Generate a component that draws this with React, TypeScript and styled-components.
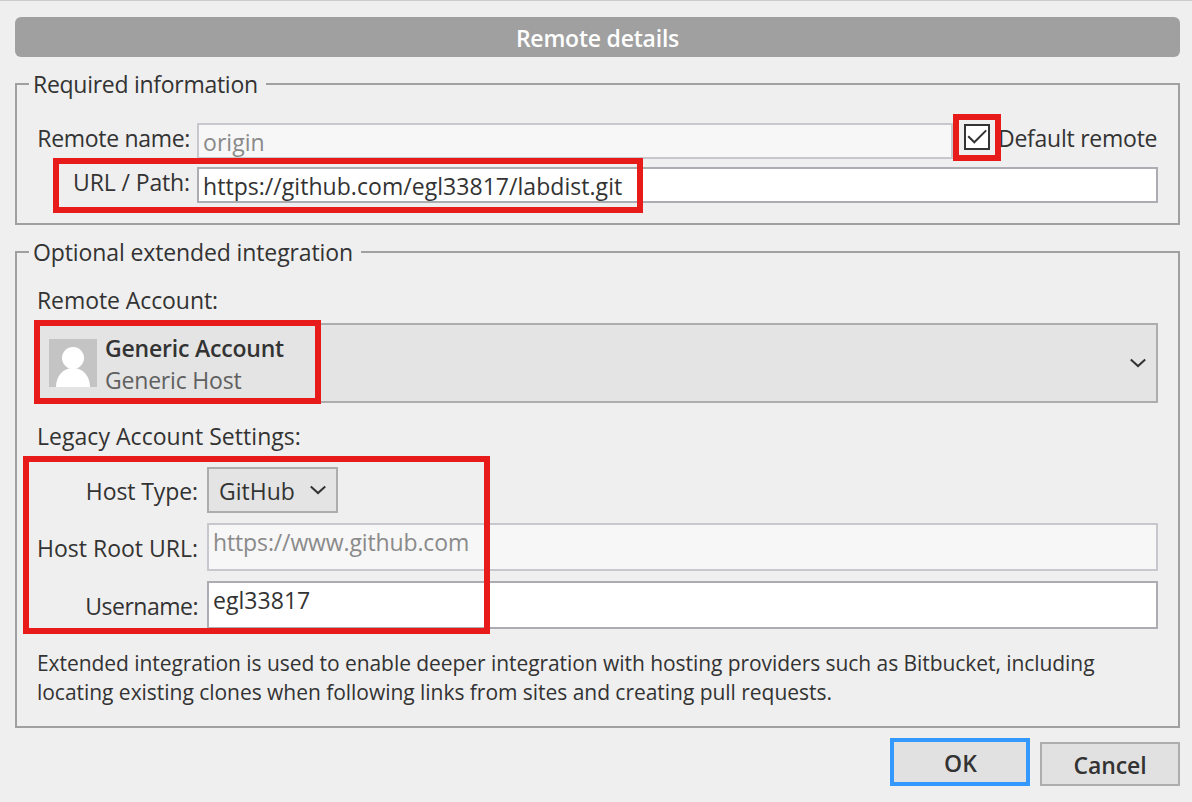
import React from 'react';
import styled, { createGlobalStyle, css } from 'styled-components';

const GlobalStyle = createGlobalStyle`
  *, *::before, *::after { box-sizing: border-box; }
  body {
    margin: 0;
    background: #efefef;
    font-family: "Open Sans", "Noto Sans", sans-serif;
    font-size: 23px;
    color: #333;
  }
`;

const Dialog = styled.main`
  position: relative;
  display: flex;
  flex-direction: column;
  width: 1192px;
  height: 802px;
  padding: 16px 12px 0 15px;
  border-top: 1px solid #cbcbcb;
  background: #efefef;
  overflow: hidden;
`;

const Text = styled.span<{ $tracking?: number }>`
  letter-spacing: ${({ $tracking = 0 }) => $tracking}px;
  white-space: nowrap;
`;

const TitleBar = styled.h1`
  flex: none;
  width: 1165px;
  height: 40px;
  margin: 0;
  padding-top: 1px;
  border-radius: 6px;
  background: #a0a0a0;
  color: #fff;
  font-size: 23px;
  font-weight: 600;
  line-height: 40px;
  text-align: center;
`;

const Group = styled.fieldset<{ $height: number }>`
  flex: none;
  width: 1165px;
  height: ${({ $height }) => $height}px;
  min-width: 0;
  margin: 14px 0 0;
  padding: 0 20px 0 12px;
  border: 2px solid #a0a0a0;
`;

const Legend = styled.legend<{ $width: number }>`
  width: ${({ $width }) => $width}px;
  height: 26px;
  padding: 0 0 0 4px;
  line-height: 26px;
`;

const RequiredGrid = styled.div`
  display: grid;
  grid-template-columns: 153px 1fr;
  column-gap: 7px;
  row-gap: 8px;
  padding: 26px 0 0 8px;
`;

const LegacyGrid = styled.div`
  display: grid;
  grid-template-columns: 161px 1fr;
  column-gap: 9px;
  row-gap: 10px;
  padding: 16px 0 0 8px;
`;

const FieldLabel = styled.label<{ $centered?: boolean }>`
  line-height: 30px;
  text-align: right;
  white-space: nowrap;
  ${({ $centered }) =>
    $centered &&
    css`
      align-self: center;
      padding-top: 2px;
    `}
`;

const NameRow = styled.div`
  display: flex;
`;

const Field = styled.div<{ $disabled?: boolean; $height: number }>`
  flex: 1;
  height: ${({ $height }) => $height}px;
  padding: 1px 4px 0;
  border: 2px solid ${({ $disabled }) => ($disabled ? '#c7c7cd' : '#abadb3')};
  background: ${({ $disabled }) => ($disabled ? '#f7f7f7' : '#fff')};
  color: ${({ $disabled }) => ($disabled ? '#8a8a8a' : '#333')};
  line-height: 32px;
`;

const DefaultRemote = styled.label`
  display: flex;
  width: 205px;
  padding-left: 11px;
  line-height: 30px;
`;

const CheckBox = styled.span`
  flex: none;
  width: 26px;
  height: 26px;
  margin: 1px 8px 0 0;
  border: 2px solid #333;
  background: #fff;

  svg { display: block; }
`;

const SectionLabel = styled.div<{ $top: number }>`
  padding: ${({ $top }) => $top}px 0 0 8px;
  line-height: 30px;
`;

const AccountSelect = styled.div`
  display: flex;
  height: 80px;
  margin: 8px 0 0 8px;
  padding: 0 10px;
  border: 2px solid #adadad;
  background: #e4e4e4;
`;

const Avatar = styled.svg`
  flex: none;
  width: 48px;
  height: 48px;
  margin-top: 14px;
`;

const AccountText = styled.div`
  display: flex;
  flex: 1;
  flex-direction: column;
  padding: 7px 0 0 8px;
  line-height: 32px;
`;

const AccountName = styled(Text)`
  font-weight: 600;
`;

const HostName = styled(Text)`
  color: #606060;
`;

const Chevron = styled.svg`
  flex: none;
  align-self: center;
  width: 16px;
  height: 10px;
`;

const HostSelect = styled.div`
  display: flex;
  justify-content: space-between;
  width: 131px;
  height: 46px;
  padding: 0 10px;
  border: 2px solid #adadad;
  background: #e4e4e4;
  line-height: 44px;
`;

const Note = styled.p`
  display: flex;
  flex-direction: column;
  margin: 0;
  padding: 20px 0 0 8px;
  font-size: 21px;
  line-height: 29px;
`;

const Footer = styled.footer`
  display: flex;
  align-items: flex-end;
  justify-content: flex-end;
  gap: 10px;
  margin-top: 10px;
`;

const Button = styled.button<{ $primary?: boolean }>`
  width: 140px;
  height: ${({ $primary }) => ($primary ? 48 : 44)}px;
  padding: ${({ $primary }) => ($primary ? '2px 0 0 1px' : '2px 0 0')};
  border: ${({ $primary }) => ($primary ? '4px solid #3399ff' : '2px solid #adadad')};
  background: #e1e1e1;
  color: #333;
  font: 600 23px/36px "Open Sans", "Noto Sans", sans-serif;
`;

const Highlight = styled.div<{ $x: number; $y: number; $w: number; $h: number }>`
  position: absolute;
  left: ${({ $x }) => $x}px;
  top: ${({ $y }) => $y - 1}px;
  width: ${({ $w }) => $w}px;
  height: ${({ $h }) => $h}px;
  border: 6px solid #e81b1b;
  pointer-events: none;
`;

const DownArrow = () => (
  <Chevron viewBox="0 0 16 10" fill="none" stroke="#333" strokeWidth="2">
    <path d="M0.8 1.5 8 8.1 15.2 1.5" />
  </Chevron>
);

export default function App() {
  return (
    <>
      <GlobalStyle />
      <Dialog>
        <TitleBar>
          <Text $tracking={-0.22}>Remote details</Text>
        </TitleBar>

        <Group $height={154}>
          <Legend $width={237}>
            <Text $tracking={-0.28}>Required information</Text>
          </Legend>
          <RequiredGrid>
            <FieldLabel>
              <Text $tracking={-0.31}>Remote name:</Text>
            </FieldLabel>
            <NameRow>
              <Field $disabled $height={36}>
                <Text $tracking={0.05}>origin</Text>
              </Field>
              <DefaultRemote>
                <CheckBox>
                  <svg width="22" height="22" viewBox="0 0 22 22" fill="none" stroke="#333" strokeWidth="2">
                    <path d="M2.2 10.2 8.3 16.3 20.2 4.4" />
                  </svg>
                </CheckBox>
                <Text $tracking={-0.25}>Default remote</Text>
              </DefaultRemote>
            </NameRow>
            <FieldLabel>
              <Text $tracking={-0.13}>URL / Path:</Text>
            </FieldLabel>
            <Field $height={36}>
              <Text $tracking={0.045}>https://github.com/egl33817/labdist.git</Text>
            </Field>
          </RequiredGrid>
        </Group>

        <Group $height={489}>
          <Legend $width={332}>
            <Text $tracking={-0.115}>Optional extended integration</Text>
          </Legend>
          <SectionLabel $top={20}>
            <Text $tracking={-0.08}>Remote Account:</Text>
          </SectionLabel>
          <AccountSelect>
            <Avatar viewBox="0 0 48 48">
              <path fill="#c4c4c4" d="M0 0h48v48H0z" />
              <circle cx="24" cy="19" r="11" fill="#fff" />
              <path fill="#fff" d="M7 48C7 37 14 29 24 29S41 37 41 48z" />
            </Avatar>
            <AccountText>
              <AccountName $tracking={-0.2}>Generic Account</AccountName>
              <HostName $tracking={-0.2}>Generic Host</HostName>
            </AccountText>
            <DownArrow />
          </AccountSelect>
          <SectionLabel $top={18}>
            <Text $tracking={0.045}>Legacy Account Settings:</Text>
          </SectionLabel>
          <LegacyGrid>
            <FieldLabel $centered>
              <Text $tracking={-0.1}>Host Type:</Text>
            </FieldLabel>
            <HostSelect>
              <Text $tracking={0}>GitHub</Text>
              <DownArrow />
            </HostSelect>
            <FieldLabel $centered>
              <Text $tracking={0}>Host Root URL:</Text>
            </FieldLabel>
            <Field $disabled $height={48}>
              <Text $tracking={-0.13}>https://www.github.com</Text>
            </Field>
            <FieldLabel $centered>
              <Text $tracking={-0.5}>Username:</Text>
            </FieldLabel>
            <Field $height={48}>
              <Text $tracking={0.04}>egl33817</Text>
            </Field>
          </LegacyGrid>
          <Note>
            <Text $tracking={-0.062}>
              Extended integration is used to enable deeper integration with hosting providers such as Bitbucket, including
            </Text>
            <Text $tracking={-0.035}>
              locating existing clones when following links from sites and creating pull requests.
            </Text>
          </Note>
        </Group>

        <Footer>
          <Button $primary>
            <Text $tracking={0}>OK</Text>
          </Button>
          <Button>
            <Text $tracking={-0.1}>Cancel</Text>
          </Button>
        </Footer>

        <Highlight $x={953} $y={114} $w={48} $h={47} />
        <Highlight $x={53} $y={158} $w={590} $h={55} />
        <Highlight $x={34} $y={320} $w={287} $h={84} />
        <Highlight $x={23} $y={456} $w={467} $h={178} />
      </Dialog>
    </>
  );
}
